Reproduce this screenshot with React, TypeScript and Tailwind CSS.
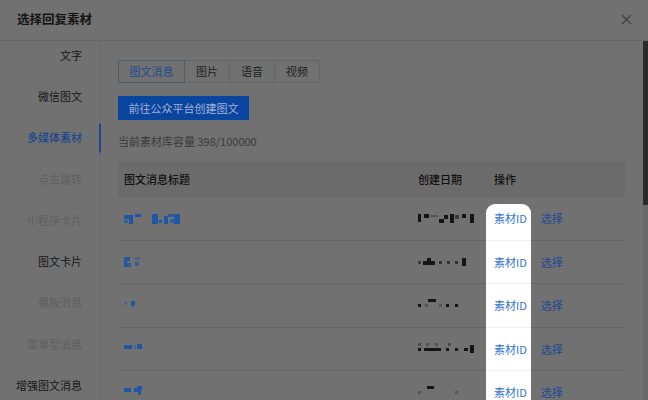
type Block = [number, number, number, number, number?];

const menu = [
  { label: "文字", state: "normal" },
  { label: "微信图文", state: "normal" },
  { label: "多媒体素材", state: "active" },
  { label: "点击跳转", state: "disabled" },
  { label: "小程序卡片", state: "disabled" },
  { label: "图文卡片", state: "normal" },
  { label: "模板消息", state: "disabled" },
  { label: "菜单型消息", state: "disabled" },
  { label: "增强图文消息", state: "normal" },
];

const tabs = ["图文消息", "图片", "语音", "视频"];

// redacted titles / dates, drawn as mosaic blocks
const rows: { title: Block[]; date: Block[] }[] = [
  {
    title: [[0, 3, 6, 4], [5, 3, 4, 9], [0, 8, 4, 3, 0.7], [11, 2, 6, 3], [28, 2, 6, 10], [35, 8, 3, 3], [40, 4, 4, 8], [44, 2, 6, 3, 0.8], [50, 2, 6, 10], [46, 7, 4, 4, 0.7]],
    date: [[0, 2, 3, 8], [6, 2, 5, 4], [12, 3, 8, 2, 0.3], [21, 7, 5, 4], [26, 3, 4, 4], [32, 2, 4, 9], [37, 3, 4, 4, 0.6], [44, 2, 4, 4], [52, 2, 4, 9]],
  },
  {
    title: [[0, 1, 6, 4], [0, 1, 3, 10], [3, 7, 4, 4, 0.8], [11, 1, 5, 3, 0.5], [11, 6, 4, 4, 0.7]],
    date: [[0, 5, 3, 3, 0.6], [5, 5, 6, 4], [9, 2, 4, 4], [11, 5, 6, 4], [21, 5, 3, 3, 0.7], [29, 5, 3, 3, 0.7], [37, 5, 3, 3, 0.7], [44, 2, 4, 8]],
  },
  {
    title: [[0, 3, 3, 3, 0.4], [7, 2, 4, 5]],
    date: [[0, 5, 3, 3], [10, 0, 8, 3], [7, 5, 3, 3, 0.3], [21, 5, 3, 3, 0.3], [28, 5, 3, 3], [37, 5, 3, 3]],
  },
  {
    title: [[0, 2, 8, 4], [10, 2, 2, 4, 0.4], [13, 1, 5, 5]],
    date: [[0, 0, 3, 3, 0.4], [8, 0, 3, 3, 0.3], [17, 0, 3, 3, 0.3], [30, 0, 3, 3, 0.4], [0, 5, 3, 3], [6, 5, 17, 3], [28, 5, 3, 3], [37, 5, 3, 3], [46, 5, 4, 3], [52, 2, 4, 8]],
  },
  {
    title: [[0, 2, 7, 4], [10, 2, 4, 4], [13, 0, 5, 5], [14, 4, 3, 5]],
    date: [[9, 0, 7, 3], [0, 5, 3, 3, 0.3], [37, 5, 3, 3, 0.3]],
  },
];

function Mosaic({ blocks, color, width }: { blocks: Block[]; color: string; width: number }) {
  return (
    <svg width={width} height={12} viewBox={`0 0 ${width} 12`}>
      {blocks.map(([x, y, w, h, o], i) => (
        <rect key={i} x={x} y={y} width={w} height={h} fill={color} opacity={o ?? 1} />
      ))}
    </svg>
  );
}

export default function App() {
  return (
    <div className="relative w-[648px] h-[400px] overflow-hidden bg-[#717171] text-[11px] text-[#161616] font-['Noto_Sans_CJK_SC','Noto_Sans',sans-serif]">
      {/* header */}
      <div className="h-[41px] flex items-center justify-between pl-[17px] pr-[16px] border-b border-[#686868]">
        <div className="text-[12.5px] font-semibold text-[#141414] -mt-[1px]">选择回复素材</div>
        <svg width="11" height="11" viewBox="0 0 11 11" className="-mt-[1px]">
          <path d="M1 1 L10 10 M10 1 L1 10" stroke="#3e3e3e" strokeWidth="1.2" />
        </svg>
      </div>

      <div className="flex h-[359px]">
        {/* sidebar */}
        <div className="w-[101px] shrink-0 border-r border-[#686868] flex flex-col gap-[21.25px] pt-[4px]">
          {menu.map((m) => (
            <div key={m.label} className="relative h-[20px] flex items-center justify-end pr-[18px]">
              <span
                className={
                  m.state === "active"
                    ? "text-[#1b4790] font-medium"
                    : m.state === "disabled"
                    ? "text-[#5f5f5f]"
                    : "text-[#161616]"
                }
              >
                {m.label}
              </span>
              {m.state === "active" && (
                <div className="absolute -right-[1px] top-1/2 -translate-y-1/2 h-[29px] w-[2px] bg-[#1b4790]" />
              )}
            </div>
          ))}
        </div>

        {/* content */}
        <div className="flex-1 pl-[17px] pt-[19px]">
          <div className="flex h-[23px]">
            {tabs.map((t, i) => (
              <div
                key={t}
                className={
                  i === 0
                    ? "w-[67px] flex items-center justify-center border border-[#4c5a72] text-[#1d4a92]"
                    : "w-[45px] flex items-center justify-center border border-l-0 border-[#666666] text-[#222222]"
                }
              >
                {t}
              </div>
            ))}
          </div>

          <div className="mt-[13px] w-[131px] h-[24px] flex items-center justify-center bg-[#0a45a0] text-[#a3b3d2]">
            前往公众平台创建图文
          </div>

          <div className="mt-[12px] leading-[18px] text-[#3a3a3a]">当前素材库容量 398/100000</div>

          <div className="mt-[11px] w-[507px]">
            <div className="h-[36px] flex items-center bg-[#6b6b6b] font-medium text-[#111111]">
              <div className="w-[294px] pl-[6px]">图文消息标题</div>
              <div className="w-[76px] pl-[6px]">创建日期</div>
              <div className="flex-1 pl-[6px]">操作</div>
            </div>
            {rows.map((r, i) => (
              <div key={i} className="h-[43.5px] flex items-center border-b border-[#686868]">
                <div className="w-[294px] pl-[6px]">
                  <Mosaic blocks={r.title} color="#1f56a6" width={64} />
                </div>
                <div className="w-[76px] pl-[6px]">
                  <Mosaic blocks={r.date} color="#151515" width={60} />
                </div>
                <div className="flex-1 pl-[6px] flex items-center gap-[14px]">
                  <span className="relative z-20 text-[#3474cf]">素材ID</span>
                  <span className="text-[#1d4a92]">选择</span>
                </div>
              </div>
            ))}
          </div>
        </div>

        {/* scrollbar */}
        <div className="w-[5px] shrink-0 bg-[#6a6a6a]">
          <div className="h-[164px] bg-[#2b2b2b]" />
        </div>
      </div>

      {/* spotlight over the ID column */}
      <div className="absolute z-10 left-[486px] top-[204px] w-[45px] bottom-0 bg-white rounded-t-[9px] flex flex-col">
        <div className="h-[36.5px] shrink-0 border-b border-[#efefef]" />
        <div className="h-[43.5px] shrink-0 border-b border-[#efefef]" />
        <div className="h-[43.5px] shrink-0 border-b border-[#efefef]" />
        <div className="h-[43.5px] shrink-0 border-b border-[#efefef]" />
      </div>
    </div>
  );
}
